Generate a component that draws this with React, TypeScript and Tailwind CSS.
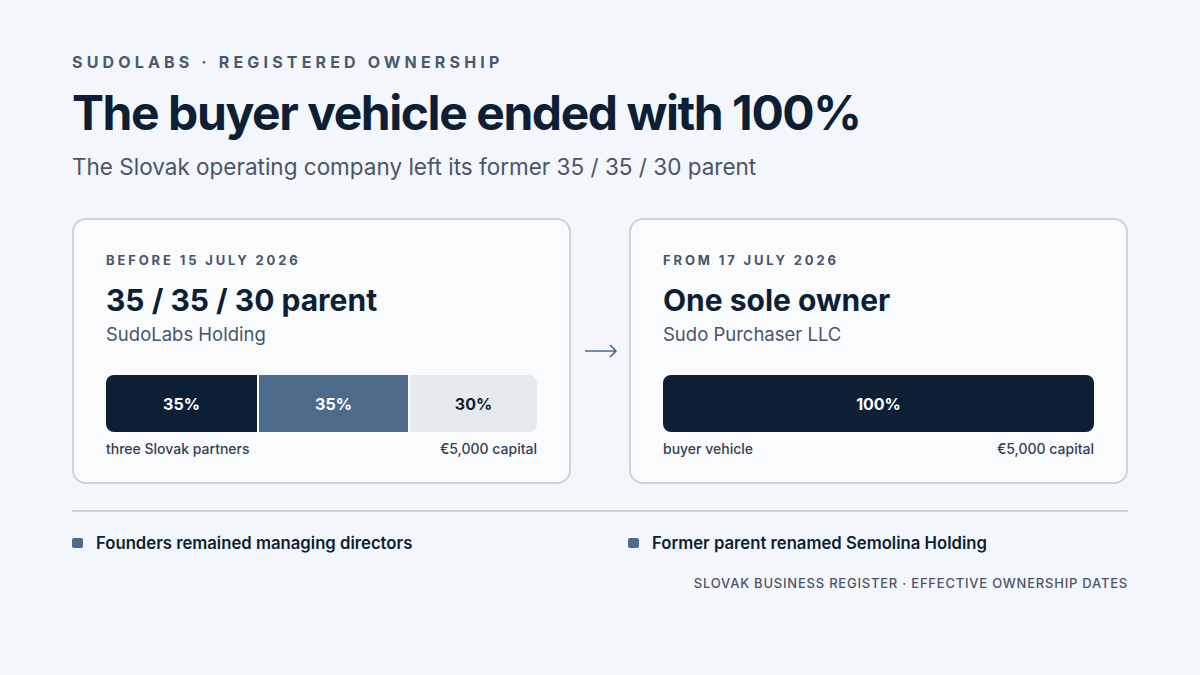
import React from "react";

function Card({
  label,
  title,
  sub,
  bar,
  left,
  right,
}: {
  label: string;
  title: string;
  sub: string;
  bar: React.ReactNode;
  left: string;
  right: string;
}) {
  return (
    <div className="w-[499px] h-[266px] rounded-[14px] border-2 border-[#cdd3db] bg-[#fafbfd] px-[32px] pt-[30px]">
      <div className="text-[13px] font-bold tracking-[0.22em] text-[#475569] leading-[20px]">{label}</div>
      <div className="mt-[13px] text-[30px] font-bold tracking-[0em] text-[#0c1f35] leading-[34px]">{title}</div>
      <div className="mt-[5px] text-[18.5px] text-[#475569] leading-[24px]">{sub}</div>
      <div className="mt-[29px] h-[57px] flex rounded-[8px] overflow-hidden">{bar}</div>
      <div className="mt-[8px] flex justify-between text-[14px] font-medium text-[#334155] leading-[18px]">
        <span>{left}</span>
        <span>{right}</span>
      </div>
    </div>
  );
}

export default function App() {
  return (
    <div
      className="w-[1200px] h-[675px] bg-[#f3f6fa] px-[72px] pt-[51px]"
      style={{ fontFamily: "Inter, 'Noto Sans', sans-serif" }}
    >
      <div className="text-[16px] font-bold tracking-[0.26em] text-[#4a5a6e] leading-[22px]">
        SUDOLABS · REGISTERED OWNERSHIP
      </div>
      <h1 className="mt-[10px] text-[48px] font-bold tracking-[-0.03em] text-[#0c1f35] leading-[60px]">
        The buyer vehicle ended with 100%
      </h1>
      <div className="mt-[9px] text-[22.5px] text-[#4a5568] leading-[30px]">
        The Slovak operating company left its former 35 / 35 / 30 parent
      </div>

      <div className="mt-[36px] flex items-center justify-between">
        <Card
          label="BEFORE 15 JULY 2026"
          title="35 / 35 / 30 parent"
          sub="SudoLabs Holding"
          left="three Slovak partners"
          right="€5,000 capital"
          bar={
            <>
              <div className="w-[151px] bg-[#0c1f35] text-white flex items-center justify-center text-[16px] font-bold">35%</div>
              <div className="w-[2px] bg-white" />
              <div className="w-[149px] bg-[#4d6a8a] text-white flex items-center justify-center text-[16px] font-bold">35%</div>
              <div className="w-[2px] bg-white" />
              <div className="flex-1 bg-[#e5eaef] text-[#0c1f35] flex items-center justify-center text-[16px] font-bold">30%</div>
            </>
          }
        />
        <svg width="34" height="14" viewBox="0 0 34 14" className="ml-[1px]">
          <path d="M1 7 H32 M26 1 L32 7 L26 13" fill="none" stroke="#4d6a8a" strokeWidth="1.6" />
        </svg>
        <Card
          label="FROM 17 JULY 2026"
          title="One sole owner"
          sub="Sudo Purchaser LLC"
          left="buyer vehicle"
          right="€5,000 capital"
          bar={
            <div className="flex-1 bg-[#0c1f35] text-white flex items-center justify-center text-[16px] font-bold">100%</div>
          }
        />
      </div>

      <div className="mt-[26px] h-[2px] bg-[#cbd1d9]" />
      <div className="mt-[19px] flex">
        <div className="w-[556px] flex items-center gap-[13px]">
          <div className="w-[11px] h-[10px] rounded-[2px] bg-[#4d6a8a]" />
          <span className="text-[16.7px] font-semibold text-[#0c1f35] leading-[24px]">Founders remained managing directors</span>
        </div>
        <div className="flex items-center gap-[13px]">
          <div className="w-[11px] h-[10px] rounded-[2px] bg-[#4d6a8a]" />
          <span className="text-[16.7px] font-semibold text-[#0c1f35] leading-[24px]">Former parent renamed Semolina Holding</span>
        </div>
      </div>
      <div className="mt-[19px] text-right text-[13px] font-medium tracking-[0.06em] text-[#4a5568] leading-[18px]">
        SLOVAK BUSINESS REGISTER · EFFECTIVE OWNERSHIP DATES
      </div>
    </div>
  );
}
